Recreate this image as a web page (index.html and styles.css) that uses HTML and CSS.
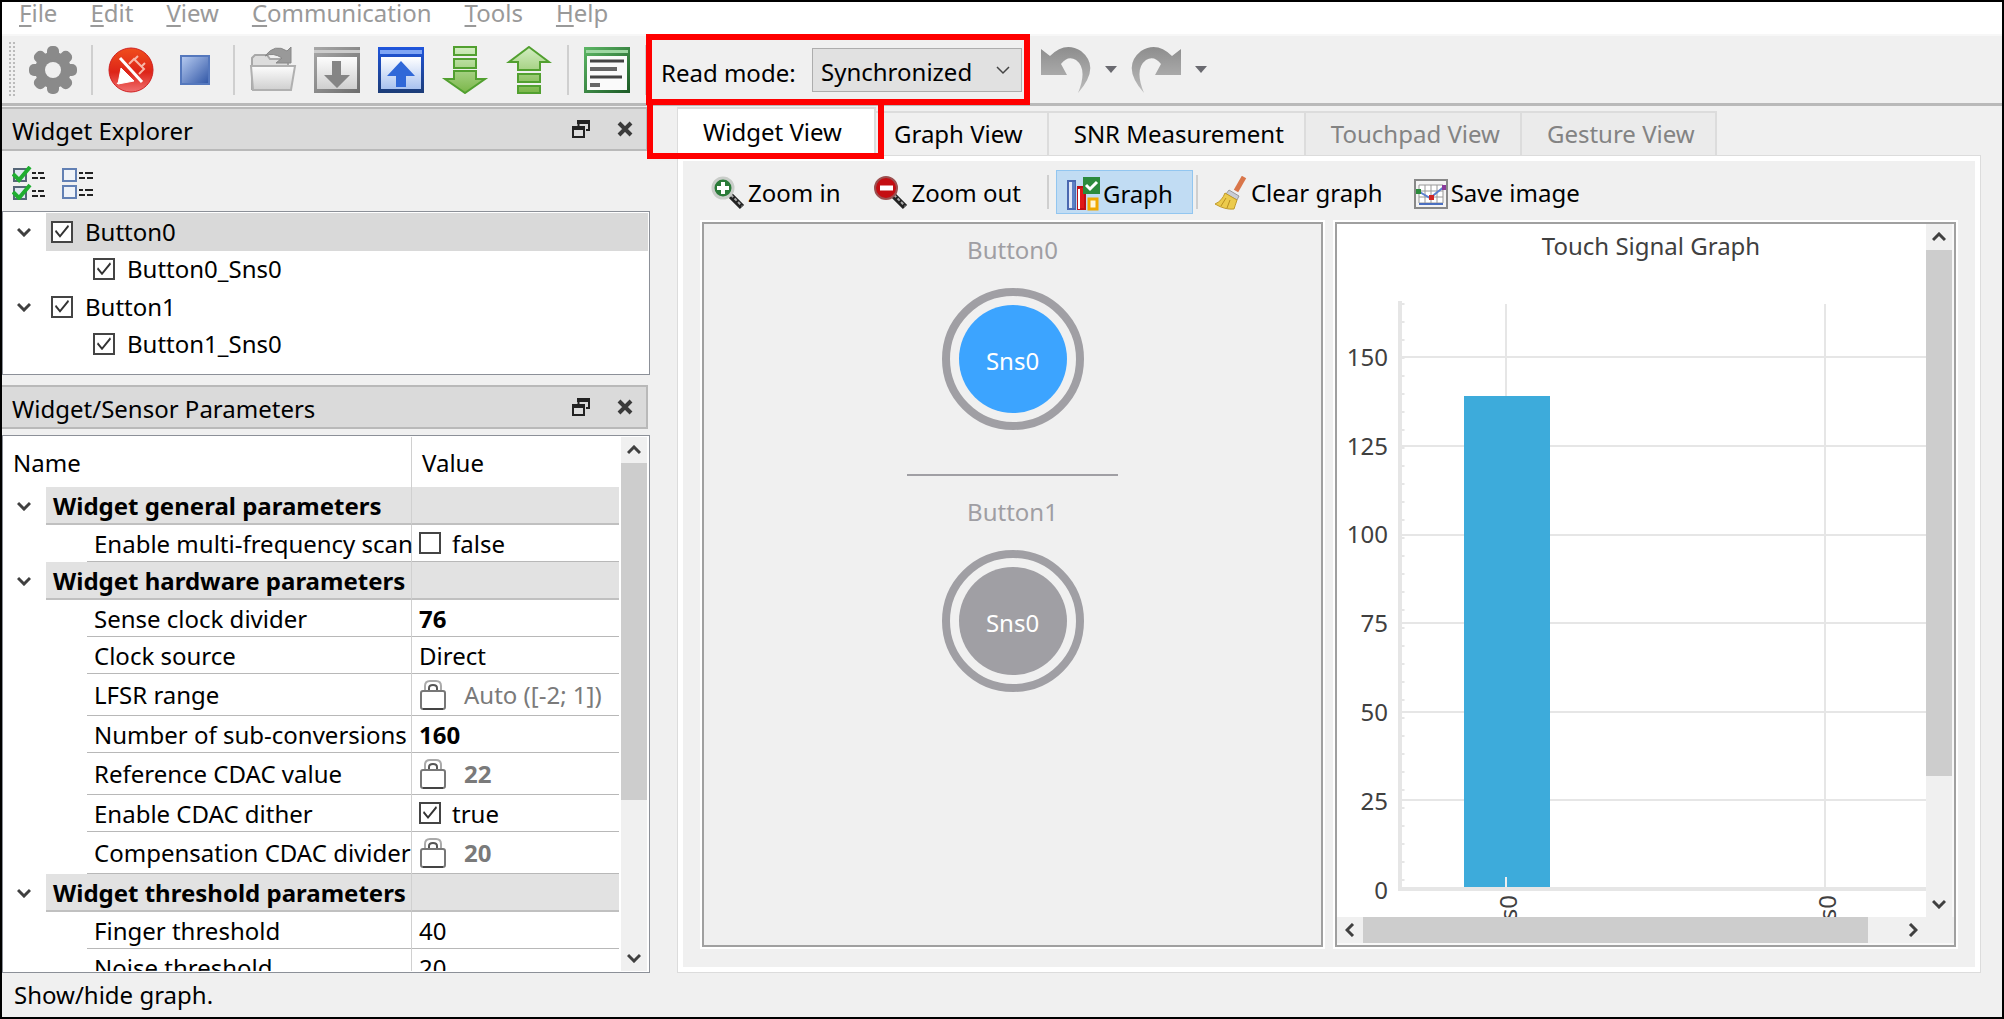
FILE: index.html
```html
<!DOCTYPE html>
<html lang="en">
<head>
<meta charset="utf-8">
<title>Tuner</title>
<link rel="stylesheet" href="styles.css">
</head>
<body>
<svg class="defs" aria-hidden="true">
  <defs>
    <linearGradient id="gRed" x1="0" y1="0" x2="0" y2="1"><stop offset="0" stop-color="#f04e1c"/><stop offset=".55" stop-color="#dd2418"/><stop offset="1" stop-color="#f07070"/></linearGradient>
    <linearGradient id="gBlue" x1="0" y1="0" x2="1" y2="1"><stop offset="0" stop-color="#b9cdf2"/><stop offset="1" stop-color="#2f55a5"/></linearGradient>
    <linearGradient id="gGrayBar" x1="0" y1="0" x2="1" y2="1"><stop offset="0" stop-color="#a8a8a8"/><stop offset="1" stop-color="#6d6d6d"/></linearGradient>
    <linearGradient id="gGray" x1="0" y1="0" x2="0" y2="1"><stop offset="0" stop-color="#fdfdfd"/><stop offset="1" stop-color="#cfcfcf"/></linearGradient>
    <linearGradient id="gBlueBar" x1="0" y1="0" x2="0" y2="1"><stop offset="0" stop-color="#1f55dd"/><stop offset="1" stop-color="#1c3c77"/></linearGradient>
    <linearGradient id="gPale" x1="0" y1="0" x2="0" y2="1"><stop offset="0" stop-color="#ffffff"/><stop offset="1" stop-color="#a9c2ef"/></linearGradient>
    <linearGradient id="gDown" x1="0" y1="0" x2="0" y2="1"><stop offset="0" stop-color="#d3eec2"/><stop offset="1" stop-color="#7ab648"/></linearGradient>
    <linearGradient id="gGreenBar" x1="0" y1="0" x2="1" y2="1"><stop offset="0" stop-color="#5db765"/><stop offset="1" stop-color="#1c5a26"/></linearGradient>
    <linearGradient id="gArrow" x1="0" y1="0" x2="0" y2="1"><stop offset="0" stop-color="#8d8d8d"/><stop offset="1" stop-color="#bcbcbc"/></linearGradient>
    <symbol id="float" viewBox="0 0 18 18"><path d="M5 1h12v9h-3M6.500 1v5" fill="none" stroke="#222" stroke-width="2"/><path d="M5 0h13v4H5z" fill="#222"/><path d="M1 7h11v10H1z" fill="#ddd" stroke="#222" stroke-width="2"/><path d="M0 6h13v4H0z" fill="#222"/></symbol>
    <symbol id="close" viewBox="0 0 16 16"><path d="M2 2l12 12M14 2L2 14" stroke="#3a3a3a" stroke-width="4"/></symbol>
    <symbol id="chev" viewBox="0 0 14 10"><path d="M1 2l6 6 6-6" fill="none" stroke="#404040" stroke-width="3"/></symbol>
    <symbol id="lock" viewBox="0 0 28 30"><path d="M6 10V6q0-5 5-5h6q5 0 5 5v4" fill="#fff" stroke="#aaa" stroke-width="2"/><path d="M10 10V8q0-3 4-3t4 3v2" fill="none" stroke="#555" stroke-width="2"/><rect x="2" y="11" width="24" height="18" rx="2" fill="#fff" stroke="#777" stroke-width="2"/><path d="M4 29h20" stroke="#444" stroke-width="2"/></symbol>
  </defs>
</svg>
<div class="app">
  <nav class="menubar">
    <a href="#"><u>F</u>ile</a><a href="#"><u>E</u>dit</a><a href="#"><u>V</u>iew</a><a href="#"><u>C</u>ommunication</a><a href="#"><u>T</u>ools</a><a href="#"><u>H</u>elp</a>
  </nav>
  <div class="toolbar">
    <span class="grip"></span>
    <div class="tools">
      <button type="button" class="tool" aria-label="Settings"><svg viewBox="0 0 48 48"><g fill="#8a8a8a"><circle cx="24" cy="24" r="18"/><g id="teeth"><rect x="18" y="0" width="12" height="48" rx="5"/><rect x="0" y="18" width="48" height="12" rx="5"/></g><use href="#teeth" transform="rotate(45 24 24)"/></g><circle cx="24" cy="24" r="8" fill="#f0f0f0"/></svg></button>
    </div>
    <span class="sep"></span>
    <div class="tools">
      <button type="button" class="tool" aria-label="Disconnect"><svg viewBox="0 0 48 48"><circle cx="24" cy="24" r="22" fill="url(#gRed)" stroke="#d02020" stroke-width="1"/><path d="M14 22l13 13-16 3zM13 34l-3 4" fill="#fff" stroke="#fff"/><path d="M22 18l5-5 10 10-5 5M28 13l3-3M35 20l3-3" fill="none" stroke="#f7b7a8" stroke-width="2"/><path d="M13 12l22 24" stroke="#fff" stroke-width="3"/></svg></button>
      <button type="button" class="tool" aria-label="Stop"><svg viewBox="0 0 48 48"><rect x="10" y="10" width="28" height="28" fill="url(#gBlue)" stroke="#5578bd" stroke-width="2"/></svg></button>
    </div>
    <span class="sep"></span>
    <div class="tools">
      <button type="button" class="tool" aria-label="Open"><svg viewBox="0 0 48 48"><path d="M3 43V12l3-3h12l3 4h18v30z" fill="#ddd" stroke="#a8a8a8" stroke-width="2"/><path d="M2 20h44l-4 24H4z" fill="url(#gGray)" stroke="#b0b0b0" stroke-width="2"/><path d="M16 10Q26 -3 38 5l4-4v16H27l6-5Q24 6 16 10z" fill="#999" stroke="#888"/></svg></button>
      <button type="button" class="tool" aria-label="Load"><svg viewBox="0 0 48 48"><rect x="1" y="1" width="46" height="46" fill="url(#gGrayBar)"/><rect x="1" y="4" width="46" height="3" fill="#ccc"/><rect x="4" y="11" width="40" height="32" fill="url(#gGray)"/><path d="M19 15h9v14h9L24 42 11 29h8z" fill="#858585"/></svg></button>
      <button type="button" class="tool" aria-label="Apply"><svg viewBox="0 0 48 48"><rect x="1" y="1" width="46" height="46" fill="url(#gBlueBar)"/><rect x="3" y="4" width="42" height="4" fill="#7fa5f5"/><rect x="4" y="11" width="40" height="32" fill="url(#gPale)"/><path d="M24 15l14 15h-9v11H19V30h-9z" fill="#3068d8"/></svg></button>
      <button type="button" class="tool" aria-label="Read"><svg viewBox="0 0 48 48"><g fill="url(#gDown)" stroke="#52a030" stroke-width="2"><path d="M13 1h22v8H13zM13 13h22v9H13zM13 25h22v8h9L24 47 4 33h9z"/></g></svg></button>
      <button type="button" class="tool" aria-label="Write"><svg viewBox="0 0 48 48"><g fill="url(#gDown)" stroke="#52a030" stroke-width="2"><path d="M24 1l20 15h-9v8H13v-8H4zM13 28h22v8H13zM13 40h22v7H13z"/></g></svg></button>
    </div>
    <span class="sep"></span>
    <div class="tools">
      <button type="button" class="tool" aria-label="Log"><svg viewBox="0 0 48 48"><rect x="1" y="1" width="46" height="46" fill="url(#gGreenBar)"/><rect x="3" y="4" width="42" height="3" fill="#9fd8a3"/><rect x="4" y="10" width="40" height="34" fill="#fafafa"/><path d="M7 15h34M7 31h32" stroke="#444" stroke-width="3"/><path d="M7 23h27M7 39h10" stroke="#666" stroke-width="4"/></svg></button>
    </div>
    <span class="sep"></span>
    <div class="readmode">
      <label for="mode">Read mode:</label>
      <select id="mode"><option>Synchronized</option><option>Asynchronous</option></select>
      <svg class="arrow" viewBox="0 0 14 10"><path d="M1 2l6 6 6-6" fill="none" stroke="#444" stroke-width="1.500"/></svg>
      <span class="callout"></span>
    </div>
    <div class="history">
      <button type="button" class="undo" aria-label="Undo"><svg viewBox="0 0 52 50"><path d="M1 4l9 7Q25-4 41 6 61 22 38 48 48 24 36 15q-8-5-15 4l6 11H1z" fill="url(#gArrow)"/></svg></button>
      <button type="button" class="drop" aria-label="Undo list"><svg viewBox="0 0 12 7"><path d="M0 0h12L6 7z" fill="#6a6a70"/></svg></button>
      <button type="button" class="undo" aria-label="Redo"><svg viewBox="0 0 52 50"><path transform="matrix(-1 0 0 1 52 0)" d="M1 4l9 7Q25-4 41 6 61 22 38 48 48 24 36 15q-8-5-15 4l6 11H1z" fill="url(#gArrow)"/></svg></button>
      <button type="button" class="drop" aria-label="Redo list"><svg viewBox="0 0 12 7"><path d="M0 0h12L6 7z" fill="#6a6a70"/></svg></button>
    </div>
  </div>

  <div class="workspace">
    <aside class="docks">
      <header class="dockhead"><h2>Widget Explorer</h2>
        <button type="button" aria-label="Float"><svg width="18" height="18"><use href="#float"/></svg></button>
        <button type="button" aria-label="Close"><svg width="16" height="16"><use href="#close"/></svg></button></header>
      <div class="minibar">
        <button type="button" aria-label="Check all"><svg viewBox="0 0 34 34"><g id="ck"><rect x="2" y="3" width="12" height="12" fill="#dfe8f0" stroke="#567" stroke-width="2"/><path d="M1 8l6 6L18 1" fill="none" stroke="#1fae30" stroke-width="4"/><path d="M20 7h4m2 0h6M20 12h6m2 0h5" stroke="#222" stroke-width="2"/></g><use href="#ck" y="18"/></svg></button>
        <button type="button" aria-label="Uncheck all"><svg viewBox="0 0 34 34"><g id="uc"><rect x="2" y="3" width="13" height="12" fill="#eef2f8" stroke="#6280b4" stroke-width="2"/><path d="M18 7h4m2 0h8M18 12h6m2 0h6" stroke="#222" stroke-width="2"/></g><use href="#uc" y="17"/></svg></button>
      </div>
      <div class="tree">
        <div class="node"><svg class="chev"><use href="#chev"/></svg><label class="selected"><input type="checkbox" checked>Button0</label></div>
        <div class="node child"><label><input type="checkbox" checked>Button0_Sns0</label></div>
        <div class="node"><svg class="chev"><use href="#chev"/></svg><label><input type="checkbox" checked>Button1</label></div>
        <div class="node child"><label><input type="checkbox" checked>Button1_Sns0</label></div>
      </div>
      <header class="dockhead"><h2>Widget/Sensor Parameters</h2>
        <button type="button" aria-label="Float"><svg width="18" height="18"><use href="#float"/></svg></button>
        <button type="button" aria-label="Close"><svg width="16" height="16"><use href="#close"/></svg></button></header>
      <div class="params">
        <div class="scroller">
          <table>
            <colgroup><col class="c1"><col class="c2"><col class="c3"></colgroup>
            <thead><tr><th colspan="2">Name</th><th>Value</th></tr></thead>
            <tbody>
              <tr class="group"><td><svg class="chev"><use href="#chev"/></svg></td><th>Widget general parameters</th><td></td></tr>
              <tr><td></td><td><div>Enable multi-frequency scan</div></td><td><div><label class="check"><input type="checkbox">false</label></div></td></tr>
              <tr class="group"><td><svg class="chev"><use href="#chev"/></svg></td><th>Widget hardware parameters</th><td></td></tr>
              <tr><td></td><td><div>Sense clock divider</div></td><td><div><b>76</b></div></td></tr>
              <tr><td></td><td><div>Clock source</div></td><td><div>Direct</div></td></tr>
              <tr class="tall"><td></td><td><div>LFSR range</div></td><td><div class="locked"><svg><use href="#lock"/></svg>Auto ([-2; 1])</div></td></tr>
              <tr><td></td><td><div>Number of sub-conversions</div></td><td><div><b>160</b></div></td></tr>
              <tr class="tall"><td></td><td><div>Reference CDAC value</div></td><td><div class="locked"><svg><use href="#lock"/></svg><b>22</b></div></td></tr>
              <tr><td></td><td><div>Enable CDAC dither</div></td><td><div><label class="check"><input type="checkbox" checked>true</label></div></td></tr>
              <tr class="tall"><td></td><td><div>Compensation CDAC divider</div></td><td><div class="locked"><svg><use href="#lock"/></svg><b>20</b></div></td></tr>
              <tr class="group"><td><svg class="chev"><use href="#chev"/></svg></td><th>Widget threshold parameters</th><td></td></tr>
              <tr><td></td><td><div>Finger threshold</div></td><td><div>40</div></td></tr>
              <tr><td></td><td><div>Noise threshold</div></td><td><div>20</div></td></tr>
            </tbody>
          </table>
        </div>
        <div class="vscroll">
          <button type="button" aria-label="Scroll up"><svg class="up"><use href="#chev"/></svg></button>
          <div class="track"><div class="thumb" style="height:70%"></div></div>
          <button type="button" aria-label="Scroll down"><svg><use href="#chev"/></svg></button>
        </div>
      </div>
    </aside>

    <main class="views">
      <div class="tabs" role="tablist">
        <button type="button" role="tab" class="tab active">Widget View<span class="callout"></span></button>
        <button type="button" role="tab" class="tab second">Graph View</button>
        <button type="button" role="tab" class="tab">SNR Measurement</button>
        <button type="button" role="tab" class="tab" disabled>Touchpad View</button>
        <button type="button" role="tab" class="tab" disabled>Gesture View</button>
      </div>
      <section class="pane">
        <div class="actions">
          <button type="button" class="zin"><svg viewBox="0 0 34 34"><path d="M19 19l12 12" stroke="#222" stroke-width="6"/><path d="M20 19l11 11" stroke="#aaa" stroke-width="2" stroke-dasharray="3 2"/><circle cx="12" cy="12" r="10" fill="#2a7a38" stroke="#c9cdc9" stroke-width="3"/><path d="M12 6v12M6 12h12" stroke="#fff" stroke-width="4"/></svg>Zoom in</button>
          <button type="button" class="zout"><svg viewBox="0 0 34 34"><path d="M19 19l12 12" stroke="#222" stroke-width="6"/><path d="M20 19l11 11" stroke="#aaa" stroke-width="2" stroke-dasharray="3 2"/><circle cx="12" cy="12" r="11" fill="#c40d12" stroke="#9b5050" stroke-width="2"/><path d="M6 12h13" stroke="#fff" stroke-width="5"/></svg>Zoom out</button>
          <span class="sep"></span>
          <button type="button" class="graph" aria-pressed="true"><svg viewBox="0 0 34 34"><path d="M2 4h7v28H2z" fill="#dfe7f7" stroke="#4a68b0" stroke-width="2"/><path d="M6 5h3v26H6z" fill="#5d7fc4"/><path d="M12 10h7v22h-7z" fill="#e01818" stroke="#c00d14" stroke-width="2"/><path d="M13 12v20" stroke="#fff" stroke-width="2"/><path d="M23 22h8v10h-8z" fill="#fff6d8" stroke="#f0a800" stroke-width="3"/><rect x="17" width="17" height="17" fill="#2c8a3c"/><path d="M20 8l4 4 7-7" fill="none" stroke="#fff" stroke-width="3"/></svg>Graph</button>
          <span class="sep"></span>
          <button type="button" class="clear"><svg viewBox="0 0 34 34"><path d="M30 1L22 15" stroke="#d9764a" stroke-width="5"/><path d="M15 14l10 6-2 4-11-6z" fill="#c9ccd4" stroke="#999"/><path d="M11 17l12 7q-2 6-3 9-9 1-19-5 7-3 10-11z" fill="#eccb4c" stroke="#c09a2a"/><path d="M12 22l-5 8M16 24l-3 8" stroke="#b98f20"/></svg>Clear graph</button>
          <button type="button" class="save"><svg viewBox="0 0 34 34"><rect x="1" y="4" width="32" height="28" fill="#f4f4f4" stroke="#888" stroke-width="2"/><path d="M5 9h24v18H5zM11 9v18M17 9v18M23 9v18M5 15h24M5 21h24" fill="#fff" stroke="#999"/><path d="M5 28h24" stroke="#4a6fc0" stroke-width="2"/><path d="M4 15l12 7L31 10" fill="none" stroke="#5b7fd0" stroke-width="2"/><rect x="2" y="13" width="5" height="5" fill="#2a8a3a"/><rect x="15" y="19" width="5" height="5" fill="#d02525"/><rect x="28" y="9" width="4" height="5" fill="#8a3a9a"/></svg>Save image</button>
        </div>
        <div class="split">
          <div class="canvas">
            <figure class="sensor on"><figcaption>Button0</figcaption><div class="ring"><div class="disc">Sns0</div></div></figure>
            <hr>
            <figure class="sensor"><figcaption>Button1</figcaption><div class="ring"><div class="disc">Sns0</div></div></figure>
          </div>
          <div class="plot">
            <svg class="chart" id="chart">
              <text class="title" x="314" y="31">Touch Signal Graph</text>
              <g class="grid">
                <rect x="65" y="132" width="100%" height="2"/><rect x="65" y="221" width="100%" height="2"/><rect x="65" y="310" width="100%" height="2"/><rect x="65" y="398" width="100%" height="2"/><rect x="65" y="487" width="100%" height="2"/><rect x="65" y="575" width="100%" height="2"/>
                <rect x="168" y="80" width="2" height="585"/><rect x="487" y="80" width="2" height="585"/>
                <rect x="61" y="77" width="4" height="590"/><rect x="61" y="663" width="100%" height="4"/>
                <path class="ticks" d="M66 79v584"/>
              </g>
              <rect class="bar" x="127" y="172" width="86" height="491"/>
              <rect class="mark" x="168" y="653" width="2" height="10"/>
              <g class="ylab"><text x="51" y="142">150</text><text x="51" y="231">125</text><text x="51" y="319">100</text><text x="51" y="408">75</text><text x="51" y="497">50</text><text x="51" y="586">25</text><text x="51" y="675">0</text></g>
              <g class="xlab"><text transform="translate(180 671) rotate(-90)">s0</text><text transform="translate(499 671) rotate(-90)">s0</text></g>
            </svg>
            <div class="vscroll">
              <button type="button" aria-label="Scroll up"><svg class="up"><use href="#chev"/></svg></button>
              <div class="track"><div class="thumb" style="height:82%"></div></div>
              <button type="button" aria-label="Scroll down"><svg><use href="#chev"/></svg></button>
            </div>
            <div class="hscroll">
              <button type="button" aria-label="Scroll left"><svg class="left"><use href="#chev"/></svg></button>
              <div class="track"><div class="thumb" style="width:94%"></div></div>
              <button type="button" aria-label="Scroll right"><svg class="right"><use href="#chev"/></svg></button>
            </div>
          </div>
        </div>
      </section>
    </main>
  </div>
  <footer class="status">Show/hide graph.</footer>
</div>
</body>
</html>
```
FILE: styles.css
```css
* { box-sizing: border-box; }
body { margin: 0; background: #f0f0f0; color: #000; font: 24px/32px "Noto Sans", "Open Sans", sans-serif; }
button, select { font: inherit; color: inherit; border: 0; background: none; padding: 0; }
button { display: flex; align-items: center; white-space: nowrap; }
svg { display: block; flex: none; }
h2 { margin: 0; font: inherit; }
.defs { position: absolute; width: 0; height: 0; }

.app { display: flex; flex-direction: column; height: 100vh; border: 2px solid #000; }

.menubar { display: flex; gap: 33px; height: 34px; padding-left: 17px; background: #fff; border-bottom: 2px solid #f7f7f7; line-height: 22px; flex: none; }
.menubar a { color: #999; text-decoration: none; }
.menubar u { text-decoration-thickness: 2px; text-underline-offset: 3px; }

.toolbar { display: flex; align-items: center; height: 70px; padding-left: 7px; border-bottom: 3px solid #b9b9b9; flex: none; }
.grip { width: 6px; height: 56px; margin-right: 14px; background: radial-gradient(circle at 1px 1px, #bbb 1px, transparent 1px) 0 0 / 4px 4px; }
.tools { display: flex; gap: 16px; }
.tool, .tool svg { width: 48px; height: 48px; }
.sep { width: 2px; height: 50px; margin: 0 14px; background: #cfcfcf; }
.readmode { position: relative; display: grid; grid-template-columns: 151px 210px; align-items: center; }
.readmode label { padding-top: 6px; }
.readmode select { appearance: none; height: 44px; padding: 4px 8px 0; background: #e1e1e1; border: 1px solid #adadad; border-radius: 0; }
.readmode .arrow { position: absolute; right: 12px; top: 17px; width: 14px; height: 10px; }
.callout { position: absolute; border: 6px solid #f00; pointer-events: none; z-index: 2; }
.readmode .callout { inset: -14px -8px -13px -15px; }
.history { display: flex; align-items: center; gap: 13px; margin-left: 18px; }
.undo svg { width: 52px; height: 50px; }
.drop svg { width: 12px; height: 7px; }

.workspace { display: grid; grid-template-columns: 648px minmax(0, 1fr); column-gap: 27px; flex: 1; min-height: 0; }

.docks { display: flex; flex-direction: column; min-height: 0; padding-top: 1px; }
.dockhead { display: flex; align-items: center; height: 44px; margin-right: 2px; padding: 4px 13px 0 10px; background: #dadada; border: 2px solid #b9b9b9; border-left: 0; flex: none; }
.dockhead h2 { flex: 1; }
.dockhead button { padding-bottom: 4px; }
.dockhead button + button { margin-left: 27px; }
.minibar { display: flex; gap: 15px; height: 60px; padding: 15px 0 0 10px; flex: none; align-items: flex-start; }
.minibar svg { width: 34px; height: 34px; }
.tree { display: grid; grid-template-rows: repeat(4, 1fr); height: 164px; padding: 1px 1px 11px 0; margin-bottom: 10px; background: #fff; border: 1px solid #8c9098; flex: none; }
.node { display: grid; grid-template-columns: 43px 1fr; }
.node label { grid-column: 2; display: flex; align-items: center; gap: 12px; padding-left: 5px; }
.node.child label { padding-left: 47px; }
.node .selected { background: #d9d9d9; }
.chev { width: 14px; height: 10px; margin: 0 0 0 14px; }
.node .chev { place-self: center start; }

input[type=checkbox] { appearance: none; width: 22px; height: 22px; margin: 0; background: #fff; border: 2px solid #444; flex: none; }
input[type=checkbox]:checked::before { content: ""; display: block; width: 18px; height: 18px; background: #333; clip-path: polygon(2px 9px, 3px 7px, 7px 12px, 15px 2px, 16px 4px, 7px 15px); }

.params { display: flex; flex: 1; min-height: 0; margin-top: 6px; padding: 1px 2px 1px 0; background: #fff; border: 1px solid #8c9098; }
.scroller { flex: 1; min-width: 0; overflow: hidden; padding-right: 2px; }
table { width: 100%; table-layout: fixed; border-collapse: separate; border-spacing: 0; line-height: 35px; }
.c1 { width: 43px; }
.c2 { width: 365px; }
th, td { padding: 0; text-align: left; white-space: nowrap; }
thead th { height: 50px; font-weight: normal; padding-left: 10px; }
thead th:last-child, tbody td:last-child { border-left: 1px solid #d0d0d0; }
.group > * { height: 38px; }
.group th, .group td:last-child { background: #e2e2e2; border-bottom: 2px solid #c0c0c0; }
.group th { padding-left: 7px; }
td div { display: flex; align-items: center; height: 37px; margin-left: 41px; padding-left: 7px; border-bottom: 1px solid #b8b8b8; }
td:last-child div { margin-left: 0; }
.tall div { height: 42px; }
.check { display: flex; align-items: center; gap: 11px; }
.locked { color: #7a7a7a; gap: 17px; }
.locked svg { width: 28px; height: 30px; }

.vscroll { display: flex; flex-direction: column; width: 26px; background: #f0f0f0; }
.hscroll { display: flex; height: 26px; background: #f0f0f0; }
.vscroll button, .hscroll button { width: 26px; height: 26px; justify-content: center; flex: none; }
.vscroll svg, .hscroll svg { width: 14px; height: 10px; }
.up { transform: rotate(180deg); }
.left { transform: rotate(90deg); }
.right { transform: rotate(-90deg); }
.track { flex: 1; }
.thumb { height: 100%; background: #cdcdcd; }

.views { display: flex; flex-direction: column; min-width: 0; padding: 1px 21px 0 0; }
.tabs { display: flex; align-items: flex-end; flex: none; }
.tab { height: 44px; padding: 0 20px 0 25px; border: 2px solid #dcdcdc; border-width: 2px 2px 0 0; }
.tab.active { position: relative; height: 48px; padding-right: 32px; background: #fff; border-left-width: 1px; }
.tab.second { padding: 0 24px 0 18px; }
.tab:disabled { color: #838383; background: #ebebeb; }
.tab .callout { inset: -10px -10px -4px -31px; }
.pane { display: flex; flex-direction: column; flex: 1; min-height: 0; padding: 14px 24px 25px 18px; border: 1px solid #dcdcdc; box-shadow: inset 0 0 0 5px #fff; }
.actions { display: flex; align-items: center; height: 44px; margin-bottom: 8px; flex: none; }
.actions button { gap: 3px; padding-top: 2px; }
.actions button svg { width: 34px; height: 34px; }
.actions .sep { height: 34px; margin: 0 2px 0 0; }
.zin { margin-left: 15px; }
.zout { margin: 0 26px 0 34px; }
.actions .graph { height: 44px; margin: 0 3px 0 5px; padding: 4px 19px 0 9px; background: #c1dcf3; border: 1px solid #92c6f0; }
.clear { margin-left: 14px; }
.save { margin-left: 31px; }
.split { display: grid; grid-template-columns: 1fr 1fr; gap: 12px; flex: 1; min-height: 0; margin-left: 6px; }
.canvas, .plot { border: 2px solid #a0a0a0; outline: 2px solid #fff; min-width: 0; min-height: 0; overflow: hidden; }
.canvas { padding-top: 10px; text-align: center; }
.sensor { display: flex; flex-direction: column; align-items: center; gap: 22px; margin: 0; color: #9f9ea3; }
.ring { width: 142px; height: 142px; padding: 9px; border: 8px solid #a09fa4; border-radius: 50%; }
.disc { height: 100%; border-radius: 50%; background: #a09fa4; color: #fff; line-height: 112px; }
.on .disc { background: #3ca4ff; }
hr { width: 211px; margin: 44px auto 20px; border: 0; border-top: 2px solid #a09fa4; }

.plot { display: grid; grid-template: minmax(0, 1fr) 28px / minmax(0, 1fr) 28px; background: #fff; }
.plot .vscroll { border-right: 2px solid #f8f8f8; width: auto; }
.plot .hscroll { grid-column: 1 / 3; height: auto; padding-right: 28px; border-bottom: 2px solid #f8f8f8; }
.chart { width: 100%; height: 100%; overflow: hidden; fill: #404040; }
.title { text-anchor: middle; }
.grid { fill: #e6e6e6; }
.ticks { stroke: #e6e6e6; stroke-width: 3; stroke-dasharray: 2 16; }
.bar { fill: #3dabdb; }
.mark { fill: #eee; }
.ylab, .xlab { text-anchor: end; }

.status { height: 44px; padding: 6px 12px 0; flex: none; }
```
